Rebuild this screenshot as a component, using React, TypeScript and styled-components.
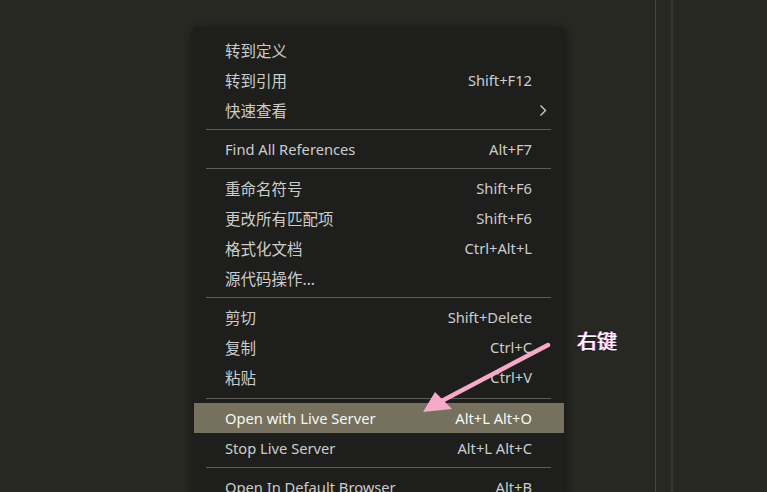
import React from 'react';
import styled, { createGlobalStyle } from 'styled-components';

const GlobalStyle = createGlobalStyle`
    html, body { margin: 0; padding: 0; background: #272822; }
    body { font-family: "Noto Sans", "Noto Sans CJK SC", sans-serif; }
`

const Editor = styled.div`
    position: relative;
    width: 767px;
    height: 492px;
    overflow: hidden;
    background:
        linear-gradient(to right, transparent 655px, #45463f 655px, #45463f 656px, transparent 656px,
            transparent 671px, #36372f 671px, #36372f 673px, transparent 673px),
        #272822;
`

const Menu = styled.div`
    position: absolute;
    top: 27px;
    left: 193px;
    width: 372px;
    padding: 8px 0;
    background: #1e1f1c;
    border-radius: 5px;
    box-shadow: 0 2px 8px rgba(0, 0, 0, 0.55);
`

const Item = styled.div<{ $active?: boolean }>`
    display: flex;
    align-items: center;
    justify-content: space-between;
    height: 30px;
    margin: 0 1px;
    padding: 0 32px 0 31px;
    font-size: 14.7px;
    color: ${p => (p.$active ? '#f8f8f2' : '#cccccc')};
    background: ${p => (p.$active ? '#75715e' : 'transparent')};
    white-space: nowrap;
`

const Label = styled.span<{ $cjk?: boolean }>`
    font-size: ${p => (p.$cjk ? '15.5px' : '14.7px')};
`

const Chevron = styled.svg`
    margin-right: -15px;
    width: 8px;
    height: 13px;
`

const Separator = styled.div<{ $extra?: number }>`
    margin: ${p => 4 + (p.$extra ?? 0)}px 14px 4px 13px;
    height: 1px;
    background: #5d5d5a;
`

const Overlay = styled.svg`
    position: absolute;
    left: 0;
    top: 0;
    width: 767px;
    height: 492px;
    pointer-events: none;
`

const Note = styled.div`
    position: absolute;
    left: 577px;
    top: 327px;
    font-size: 20px;
    line-height: 28px;
    color: #ffffff;
    font-family: "Noto Sans CJK SC", sans-serif;
    text-shadow:
        -1px 0 0 #ff6a80, 1px 0 0 #6a9bff,
        0 0 2px #000, 0 0 1px #000;
`

type Entry = { label: string; keys?: string; sub?: boolean; active?: boolean } | { sep: number };

const entries: Entry[] = [
    { label: '转到定义' },
    { label: '转到引用', keys: 'Shift+F12' },
    { label: '快速查看', sub: true },
    { sep: 0 },
    { label: 'Find All References', keys: 'Alt+F7' },
    { sep: 0 },
    { label: '重命名符号', keys: 'Shift+F6' },
    { label: '更改所有匹配项', keys: 'Shift+F6' },
    { label: '格式化文档', keys: 'Ctrl+Alt+L' },
    { label: '源代码操作...' },
    { sep: 0 },
    { label: '剪切', keys: 'Shift+Delete' },
    { label: '复制', keys: 'Ctrl+C' },
    { label: '粘贴', keys: 'Ctrl+V' },
    { sep: 2 },
    { label: 'Open with Live Server', keys: 'Alt+L Alt+O', active: true },
    { label: 'Stop Live Server', keys: 'Alt+L Alt+C' },
    { sep: 0 },
    { label: 'Open In Default Browser', keys: 'Alt+B' },
];

const App: React.FC = () => {
    return (
        <Editor>
            <GlobalStyle />
            <Menu>
                {entries.map((e, i) =>
                    'sep' in e ? (
                        <Separator key={i} $extra={e.sep} />
                    ) : (
                        <Item key={i} $active={e.active}>
                            <Label $cjk={/[\u4e00-\u9fff]/.test(e.label)}>{e.label}</Label>
                            {e.keys && <span>{e.keys}</span>}
                            {e.sub && (
                                <Chevron viewBox="0 0 8 13">
                                    <polyline points="1.5,1.5 6.5,6.5 1.5,11.5" fill="none" stroke="#cccccc" strokeWidth="1.4" />
                                </Chevron>
                            )}
                        </Item>
                    )
                )}
            </Menu>
            <Overlay viewBox="0 0 767 492">
                <line x1="548" y1="345" x2="436" y2="404" stroke="#f6a9c8" strokeWidth="4.5" strokeLinecap="round" />
                <polygon points="423,412 435,392 452,409" fill="#f6a9c8" />
            </Overlay>
            <Note>右键</Note>
        </Editor>
    )
}

export default App;
